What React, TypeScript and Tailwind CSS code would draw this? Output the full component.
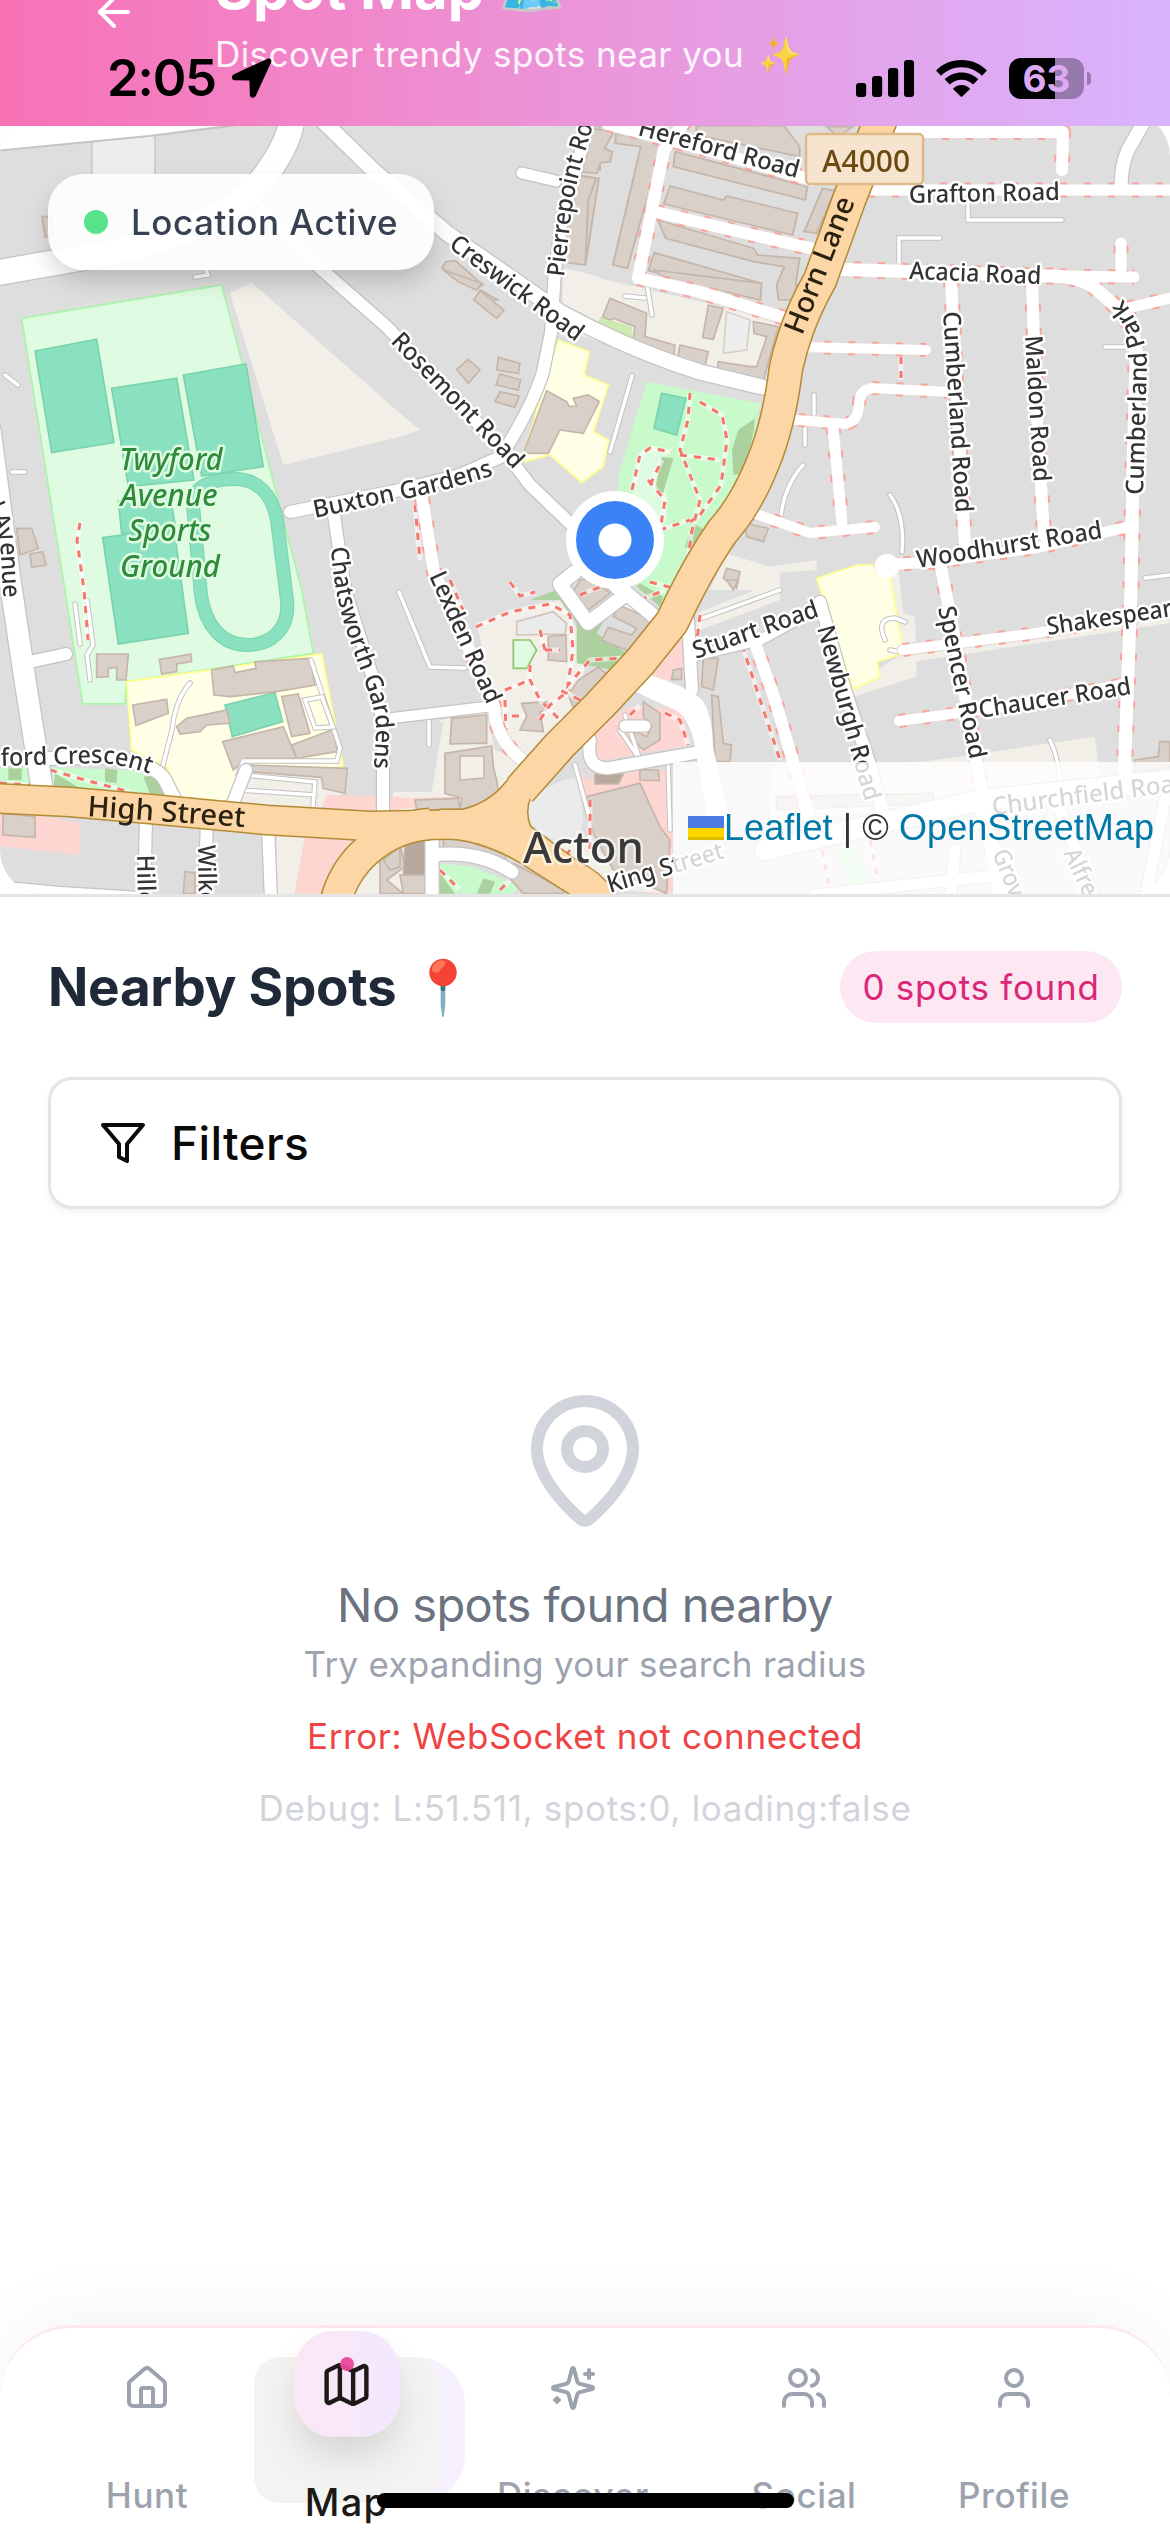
import React from "react";
import { ArrowLeft, House, Map as MapIcon, MapPin, User } from "lucide-react";

const BUILDING = { fill: "#d9d0c9", stroke: "#c6b5a9" };
const SERVICE = { fill: "none", stroke: "#fff" };

/* ---------- map data ---------- */

// Each sheet keeps its own coordinate space and is placed with a transform.
const SHEETS = {
  nw: "matrix(.3827 0 0 .3333 0 0)",
  ne: "matrix(.3827 0 0 .3333 570 0)",
  w: "matrix(.3333 0 0 .3333 0 270)",
  c: "matrix(.3333 0 0 .3333 380 270)",
  e: "matrix(.3333 0 0 .3333 770 270)",
  sw: "matrix(.3333 0 0 .3333 0 580)",
  s: "matrix(.3333 0 0 .3333 380 580)",
  se: "matrix(.3333 0 0 .3333 770 580)",
};
type Sheet = keyof typeof SHEETS;

type Area = [Sheet, string, string, string?];

const BEIGE = "#f2efe9";
const PARK = "#c8facc";
const WOOD = "#add19e";
const PITCH = "#8ae1bf";
const PITCH_EDGE = "#7bd3ae";
const SPORT = "#dffce2";
const SCHOOL = "#ffffe5";
const SCHOOL_EDGE = "#ffff8c";
const RETAIL = "#fdd6d2";
const LOT = "#eeeeee";
const DARK = "#b7a89b";

const AREAS: Area[] = [
  ["nw", "240,410 405,390 405,530 240,530", "#ededed", "#d9c9c9"],
  ["nw", "1475,805 1568,830 1568,900 1475,900", BEIGE],
  ["w", "690,70 755,38 1200,430 1260,480 1200,500 850,585", BEIGE],
  ["w", "65,145 665,45 905,960 940,1150 380,1235 375,1302 248,1302 190,930", SPORT, "#a9f5aa"],
  ["w", "105,243 290,208 342,518 155,548", PITCH, PITCH_EDGE],
  ["w", "335,355 530,325 582,630 385,650", PITCH, PITCH_EDGE],
  ["w", "550,315 738,282 790,590 605,618", PITCH, PITCH_EDGE],
  ["w", "355,692 510,672 528,780 365,790", PITCH, PITCH_EDGE],
  ["w", "308,803 522,775 565,1090 355,1122", PITCH, PITCH_EDGE],
  ["c", "550,0 1200,150 1140,350 610,200 545,180", BEIGE],
  ["c", "660,140 755,170 760,235 880,290 840,290 640,195", "#cdebb0"],
  ["c", "1040,125 1110,150 1100,240 1030,250", LOT, "#d8cfc8"],
  ["c", "535,210 628,245 612,315 685,345 640,485 686,510 670,590 605,638 510,555 435,575 430,550 460,460 500,310", SCHOOL, SCHOOL_EDGE],
  ["c", "800,335 1140,400 1115,560 1060,680 890,960 860,1010 780,940 700,760 720,600", PARK],
  ["c", "790,535 860,540 860,770 750,660", SPORT],
  ["c", "845,370 918,385 890,495 822,475", PITCH, PITCH_EDGE],
  ["c", "845,560 880,565 850,670 825,660", WOOD],
  ["c", "1125,445 1122,480 1090,612 1060,615 1056,540 1075,480", WOOD],
  ["c", "940,760 975,780 940,850 915,830", WOOD],
  ["c", "1040,850 1200,900 1200,960 990,960", BEIGE],
  ["s", "290,130 540,60 620,200 600,380 450,530 400,500 350,400", BEIGE],
  ["s", "450,60 530,30 620,140 680,110 650,160 740,220 700,270 590,250 590,130 540,60", WOOD],
  ["s", "410,125 520,95 560,130 555,162 410,165", "#ebebeb", "#d3c3bd"],
  ["s", "400,180 450,180 470,210 440,265 400,265", SPORT, "#8dc56c"],
  ["s", "700,60 760,40 830,110 800,150 720,85", BEIGE],
  ["s", "770,10 900,-20 850,75 800,40", PARK],
  ["s", "780,10 850,50 840,80 770,20", WOOD],
  ["s", "40,640 180,420 320,400 345,510 440,545 300,690 30,690", BEIGE],
  ["s", "40,430 190,425 155,635 35,635", "#dedede"],
  ["s", "30,655 230,650 230,670 30,690", RETAIL],
  ["s", "915,140 920,300 840,300 805,280", RETAIL],
  ["s", "640,460 740,380 900,385 930,495 640,545", RETAIL],
  ["s", "570,530 620,600 760,570 860,570 879,760 879,941 800,941 620,650", RETAIL],
  ["s", "450,650 550,600 600,590 610,720 590,800 500,770 440,720", "#ebebeb"],
  ["s", "500,780 620,780 720,870 880,941 700,930", BEIGE],
  ["s", "0,800 60,790 180,790 180,941 0,941", BEIGE],
  ["s", "180,850 280,860 420,920 400,941 180,941", PARK],
  ["s", "180,880 225,941 180,941", WOOD],
  ["s", "310,895 345,905 330,941 290,941", WOOD],
  ["s", "0,860 70,820 60,870 20,880", RETAIL],
  ["s", "950,100 1200,0 1200,60 960,150", BEIGE],
  ["sw", "380,305 965,222 1030,560 730,600 685,665 540,655 500,560 395,510", SCHOOL, SCHOOL_EDGE],
  ["sw", "675,375 825,338 848,425 697,470", PITCH, PITCH_EDGE],
  ["sw", "735,580 950,590 1030,640 960,685 720,670", BEIGE],
  ["sw", "0,555 480,575 500,648 150,628 0,615", PARK],
  ["sw", "165,580 240,625 240,632 160,628", WOOD],
  ["sw", "430,590 480,585 500,648 450,642", WOOD],
  ["sw", "315,565 352,570 350,610 315,605", WOOD],
  ["sw", "25,565 65,565 65,600 25,600", WOOD],
  ["sw", "0,700 110,705 242,730 238,825 0,798", RETAIL],
  ["sw", "980,645 1200,650 1200,695 965,685", RETAIL],
  ["sw", "1120,840 1200,780 1200,880", RETAIL],
  ["sw", "1120,850 1200,860 1200,941 1060,941", BEIGE],
  ["sw", "915,770 1075,775 1000,850 965,941 883,941", RETAIL],
  ["sw", "830,765 915,770 883,941 830,941", BEIGE],
  ["se", "0,-20 140,-30 140,-60 0,-40", BEIGE],
  ["se", "350,-40 385,-30 400,100 435,110 440,290 250,350 240,320 400,220", BEIGE],
  ["se", "140,-5 260,-45 355,-45 400,220 322,245 330,290 250,328", SCHOOL, SCHOOL_EDGE],
  ["se", "400,225 1200,105 1200,130 400,250", BEIGE],
  ["se", "0,560 460,545 975,470 990,600 400,680 0,740", BEIGE],
  ["se", "0,840 600,720 1200,650 1200,941 0,941", "#e9e7e4"],
  ["se", "200,800 250,790 300,900 320,930 240,930", PARK],
];

const BUILDINGS: [Sheet, string, string?][] = [
  ["nw", "1510,525 1565,535 1530,792 1483,785"],
  ["nw", "1530,378 1568,378 1568,510 1510,505"],
  ["nw", "1165,785 1190,782 1262,855 1240,868 1155,805"],
  ["nw", "1255,870 1300,900 1240,900"],
  ["nw", "110,650 135,650 135,710 118,710"],
  ["ne", "50,385 115,395 90,445 110,455 105,485 80,488 70,520 25,515"],
  ["ne", "0,525 68,535 48,600 40,795 -30,785"],
  ["ne", "120,400 215,425 238,445 150,805 112,795 185,440 118,430"],
  ["ne", "330,378 560,378 600,440 600,470 330,405"],
  ["ne", "275,455 620,560 615,600 270,500"],
  ["ne", "262,558 400,600 410,588 595,640 582,705 245,612"],
  ["ne", "230,660 480,745 490,765 600,775 590,850 600,900 545,900 540,855 560,800 480,785 250,715"],
  ["ne", "220,758 500,850 498,900 205,812"],
  ["ne", "660,565 692,572 645,700 612,695"],
  ["ne", "670,380 740,380 700,410"],
  ["w", "50,775 95,775 115,835 60,855"],
  ["w", "90,852 128,845 138,885 95,892"],
  ["c", "690,85 800,130 795,200 885,225 880,275 755,240 765,170 700,145 690,150 668,140"],
  ["c", "985,105 1030,115 1000,208 968,203"],
  ["c", "900,225 985,245 968,315 888,288"],
  ["c", "1120,155 1195,170 1150,330 1090,325 1010,310 1015,275 1110,290 1130,290 1160,200 1122,190"],
  ["c", "820,0 1145,40 1140,90 850,20"],
  ["c", "500,362 560,395 568,410 590,408 580,385 625,375 658,395 610,490 540,480 505,550 430,550"],
  ["c", "265,268 300,300 265,340 230,298"],
  ["c", "355,262 420,280 415,310 350,300"],
  ["c", "360,312 422,330 415,360 348,345"],
  ["c", "360,365 418,378 405,412 345,395"],
  ["c", "300,62 372,120 350,145 282,90"],
  ["c", "190,0 305,40 290,60 235,35"],
  ["c", "1095,760 1165,775 1150,815 1100,800"],
  ["c", "1040,895 1080,905 1070,955 1030,925"],
  ["s", "505,170 558,165 560,245 505,240"],
  ["s", "425,370 500,365 500,390 480,395 490,455 420,450 440,410"],
  ["s", "655,262 690,290 580,382 565,345 595,300"],
  ["s", "715,75 820,120 750,215 665,180 685,142 755,165 770,145 700,110"],
  ["s", "600,0 640,-10 690,40 625,90 575,45"],
  ["s", "215,415 320,405 320,490 280,490 210,492"],
  ["s", "195,520 335,498 340,560 350,600 355,635 300,672 240,690 245,655 195,640"],
  ["s", "105,660 235,655 240,688 110,690"],
  ["s", "620,650 780,610 840,740 870,780 860,941 700,870 640,760"],
  ["s", "645,582 730,582 715,612 645,612", DARK],
  ["s", "780,570 835,570 838,602 780,600"],
  ["s", "790,365 840,400 840,480 790,510 750,470 770,455 800,470 815,440 790,410"],
  ["s", "880,270 905,265 905,298 875,298"],
  ["s", "970,235 1015,235 1000,330 965,320"],
  ["s", "995,345 1015,350 1030,490 1055,495 1050,545 1005,545"],
  ["s", "0,815 60,790 75,860 20,900 70,941 0,941"],
  ["s", "75,785 140,780 140,885 70,885", DARK],
  ["s", "60,885 140,885 140,941 70,941"],
  ["s", "190,775 270,785 380,825 370,850 190,812"],
  ["s", "400,850 555,930 550,941 430,941 385,890"],
  ["s", "1040,0 1075,0 1060,30"],
  ["sw", "290,222 385,222 378,300 350,300 350,262 325,265 325,290 290,292"],
  ["sw", "478,238 530,230 572,222 575,245 530,252 530,275 485,282"],
  ["sw", "635,270 700,258 705,278 768,265 765,245 930,235 945,315 830,335 690,350 642,345"],
  ["sw", "398,375 500,358 505,400 408,437"],
  ["sw", "530,440 560,415 680,390 690,430 620,435 600,455 540,462"],
  ["sw", "845,350 895,342 930,460 875,470"],
  ["sw", "668,485 850,440 890,535 740,535 700,570"],
  ["sw", "875,495 1000,448 1012,515 890,535"],
  ["sw", "745,555 1042,565 1035,640 970,625 965,592 745,575"],
  ["sw", "10,700 105,710 105,772 8,765"],
  ["sw", "555,875 585,878 585,941 550,941"],
  ["sw", "1150,840 1200,800 1200,860 1170,870"],
  ["se", "1095,540 1165,530 1170,485 1200,485 1200,560 1095,580"],
  ["se", "20,650 490,640 490,670 20,690"],
];

// [path, width, has dashed pavement edges]
const ROADS: [string, number, boolean?][] = [
  ["M292 118C290 140 276 160 268 172C240 215 170 240 110 253L-10 274", 25],
  ["M320 118L375 172L448 234L560 312Q630 350 700 372L762 387", 15],
  ["M262 210L320 268L387 327L505 452L530 485L575 528", 12],
  ["M590 118L562 220L555 270L551 333L543 372Q533 405 503 453", 12],
  ["M522 173L556 181", 11],
  ["M608 124L700 148L812 180", 12, true],
  ["M686 120L664 150L638 278L700 292L785 318", 12, true],
  ["M656 212L740 232L818 250", 12, true],
  ["M868 190L1175 190", 11, true],
  ["M870 132L1063 132L1062 170", 12, true],
  ["M830 269L1045 276Q1078 275 1095 288L1122 312Q1138 335 1136 360L1133 470L1131 590L1124 780", 13, true],
  ["M1060 276L1134 277M1121 277L1121 243M1128 308L1175 297", 11, true],
  ["M1146 118L1128 150Q1121 165 1121 188", 13],
  ["M800 347L926 350", 10, true],
  ["M775 418L845 424Q858 422 859 405Q859 390 872 388L950 392", 10, true],
  ["M833 427L842 523", 11, true],
  ["M750 512L770 519L810 533L875 527", 10, true],
  ["M951 280L957 400L965 545", 12, true],
  ["M1032 280L1036 400L1044 535", 12, true],
  ["M880 565L935 562L1040 547L1132 526", 11, true],
  ["M940 562L957 650L977 765L1000 900", 12, true],
  ["M903 650L1030 634L1175 610", 10, true],
  ["M899 721L1010 706L1124 684", 10, true],
  ["M752 635L775 700L810 820", 12, true],
  ["M820 602L845 690L870 765L885 820", 12],
  ["M690 657L760 640L822 606", 10],
  ["M290 512L400 490L460 475L505 455", 12],
  ["M334 515L345 590L372 675L383 722L383 812", 12],
  ["M422 498L434 572L465 640L494 706Q495 740 525 762", 12, true],
  ["M393 718L494 706", 10],
  ["M-10 430L10 580L25 680L42 788", 21],
  ["M34 661L66 654", 12],
  ["M-5 760L100 757Q155 762 165 780L176 802", 13],
  ["M246 770L233 803", 12],
  ["M146 818L144 900M207 822L204 900M268 826L271 900", 12],
  ["M-5 887L60 893L140 898", 12],
  ["M575 572L560 584L588 623L625 595L600 570M625 592L655 617", 14],
  ["M688 620L692 690M590 740Q585 770 610 768L700 752", 12],
  ["M432 835L432 900M432 855Q480 850 512 872", 13],
  ["M625 726L645 726", 11],
  ["M765 850L860 828L980 800L1175 780", 20],
  ["M980 810L1000 860L1010 900M1055 800L1080 860L1095 900M1165 800L1145 900M815 895L1000 875M955 850L950 900", 11],
];

const SERVICES = [
  "M75 604L80 644M87 600L93 645L87 655L90 680",
  "M190 683Q175 700 172 730L163 765",
  "M311 660L324 700L340 748L337 761L243 761L238 775",
  "M305 700L322 697L333 727L315 728Z",
  "M245 775L315 782L313 806M240 790L315 795",
  "M399 592L430 667L465 668M429 720L429 745",
  "M632 376L610 452M1105 347L1125 347M814 395L814 415M805 425L805 445",
  "M803 465Q785 485 781 515M890 495Q905 515 902 552",
  "M840 214L840 190M968 190L968 220L1062 220M899 265L899 238L940 238",
  "M818 265L822 230M625 296L645 298M647 285L652 315",
  "M703 618L780 590M620 730L640 760L625 715M575 765L590 820M668 760L670 830",
  "M885 640Q875 618 895 618L905 622M890 650L900 652",
  "M195 277L208 275L206 270M5 375L18 385M12 472L25 472M1145 578L1170 575M1050 740Q1060 760 1060 790",
];

const FOOTPATHS = [
  "M80 523L77 540L84 590L88 640",
  "M690 393L688 420L680 450L700 500L692 530L685 580M700 402L722 415L727 440L721 485L700 515L690 522M680 455L720 460",
  "M632 490L640 455L650 448L672 452M650 485L662 460M648 480L665 500L660 530L690 520",
  "M476 627L510 612L550 604L570 615L573 650L568 685L590 660L625 658M540 630L545 650M530 665L530 680L540 700L560 720M545 650L560 650M505 690L530 680",
  "M512 716L525 716M540 720L550 705L570 690M510 582L520 596L535 592M450 580L463 610M415 505L420 560",
  "M505 700L506 735M580 700L560 690M590 800L590 850M570 850L565 857M440 870L460 890M500 890L510 880",
  "M700 615L697 640M630 715L640 705M665 713L680 720L688 745M742 645L780 760",
  "M640 600L665 590M580 595L600 587M0 783L30 785M50 770L85 780L130 792M650 582L680 590",
  "M901 357L901 380M822 850L830 890M870 840L880 890",
];

const HALO = { stroke: "#fff", strokeWidth: 5, strokeLinejoin: "round" as const, paintOrder: "stroke" };

const STRAIGHT: [string, number, number, number, number][] = [
  ["Hereford Road", 637, 135, 797, 178],
  ["Grafton Road", 909, 203, 1060, 200],
  ["Acacia Road", 909, 279, 1041, 284],
  ["Creswick Road", 448, 247, 576, 342],
  ["Rosemont Road", 390, 342, 514, 470],
  ["Lexden Road", 429, 576, 487, 705],
  ["Cumberland Road", 943, 312, 956, 513],
  ["Maldon Road", 1025, 336, 1034, 482],
  ["Woodhurst Road", 918, 568, 1103, 538],
  ["Shakespear", 1048, 635, 1173, 616],
  ["Chaucer Road", 980, 718, 1132, 694],
  ["Spencer Road", 938, 608, 970, 760],
  ["Newburgh Road", 817, 628, 865, 802],
  ["Stuart Road", 696, 659, 820, 616],
  ["Hillc", 137, 855, 138, 903],
  ["Wilkc", 198, 845, 199, 903],
  ["King Street", 610, 893, 725, 858],
  ["Churchfield Road", 993, 815, 1190, 790],
  ["Grove", 992, 853, 1015, 910],
  ["Alfred", 1063, 853, 1090, 910],
];

const CURVED: [string, string, number][] = [
  ["Pierrepoint Road", "M564 277L571 215Q577 170 602 100", 182],
  ["Buxton Gardens", "M315 518L400 500Q450 490 500 473", 184],
  ["Chatsworth Gardens", "M331 547C335 610 350 640 366 685S374 730 374 775", 228],
  ["Cumberland Park", "M1143 495L1147 365Q1147 330 1120 296", 202],
  ["rd Avenue", "M-20 490L0 540L4 608", 112],
  ["ford Crescent", "M1 766L100 763Q130 765 160 778", 150],
];

function StraightLabel({ d }: { d: [string, number, number, number, number] }) {
  const [text, x1, y1, x2, y2] = d;
  const angle = (Math.atan2(y2 - y1, x2 - x1) * 180) / Math.PI;
  return (
    <text
      transform={`translate(${x1} ${y1}) rotate(${angle})`}
      textLength={Math.hypot(x2 - x1, y2 - y1)}
      lengthAdjust="spacingAndGlyphs"
      {...HALO}
    >
      {text}
    </text>
  );
}

const PRIMARY =
  "M882 116L849 200L820 280Q796 322 786 368Q779 425 762 465Q746 505 722 532Q696 570 672 622L640 662L600 705L560 745L520 790";
const HIGH_STREET = "M-10 798L70 802L150 809L267 820L370 826L480 824";
const JUNCTION =
  "M440 810L463 810Q490 803 505 784L530 757L600 725L530 797Q524 812 530 827L578 862Q600 872 612 890L620 900L580 900L520 862Q480 838 440 838Z";
const LEFT_BRANCH = "M430 824C395 826 350 850 336 900";
const TRACK =
  "M193 505C192 487 212 479 235 479C258 479 272 495 277 520L287 600C290 630 270 645 247 645C222 645 205 625 201 595Z";

function StreetMap() {
  return (
    <svg viewBox="0 126 1170 768" className="block h-[768px] w-[1170px]" fontFamily="'Noto Sans', sans-serif">
      <rect x="0" y="100" width="1170" height="800" fill="#dedede" />
      <g className="blur-[0.7px]">
        {AREAS.map(([s, p, fill, stroke], i) => (
          <g key={i} transform={SHEETS[s]}>
            <polygon points={p} fill={fill} stroke={stroke ?? "none"} strokeWidth="5" />
          </g>
        ))}
        <path d={TRACK} fill={SPORT} stroke={PITCH_EDGE} strokeWidth="14" />
        <path d={TRACK} fill="none" stroke={PITCH} strokeWidth="12" />
        {BUILDINGS.map(([s, p, fill], i) => (
          <g key={i} transform={SHEETS[s]}>
            <polygon points={p} {...BUILDING} fill={fill ?? BUILDING.fill} strokeWidth="5" />
          </g>
        ))}
        <polygon points="460,756 484,756 484,778 460,780" fill={BEIGE} stroke="#c6b5a9" strokeWidth="1.5" />

        {SERVICES.map((d, i) => (
          <g key={i} strokeLinecap="round">
            <path d={d} {...SERVICE} stroke="#c2c2c2" strokeWidth="5.5" />
            <path d={d} {...SERVICE} strokeWidth="3.5" />
          </g>
        ))}
        {FOOTPATHS.map((d, i) => (
          <g key={i} fill="none">
            <path d={d} stroke="#fff" strokeWidth="5" opacity=".55" />
            <path d={d} stroke="#f8766c" strokeWidth="3" strokeDasharray="7 7" />
          </g>
        ))}

        <g fill="none" strokeLinejoin="round" strokeLinecap="round">
          {ROADS.map(([d, w, walk], i) => (
            <g key={i}>
              <path d={d} stroke={walk ? "#e3dcda" : "#c4c4c4"} strokeWidth={w + 2.5} />
              {walk && (
                <path d={d} stroke="#f9a59d" strokeWidth={w + 4} strokeDasharray="7 17" strokeLinecap="butt" />
              )}
            </g>
          ))}
          {ROADS.map(([d, w]) => (
            <path key={d} d={d} stroke="#fff" strokeWidth={w} />
          ))}
        </g>
        <circle cx="887" cy="566" r="12" fill="#fff" />
        <polygon points="-5,118 245,124 149,136 -5,151" fill="#fff" stroke="#c4c4c4" strokeWidth="2" />
        <path d="M632 690L650 675Q690 688 702 700Q712 712 713 748L730 820L708 820L696 752Q690 712 668 707Z" fill="#fff" />

        <g fill="none" strokeLinejoin="round">
          <path d={LEFT_BRANCH} stroke="#b48a35" strokeWidth="33" />
          <path d={HIGH_STREET} stroke="#b48a35" strokeWidth="31" />
          <path d={PRIMARY} stroke="#b48a35" strokeWidth="35" />
          <path d={JUNCTION} stroke="#b48a35" strokeWidth="3" />
          <path d={LEFT_BRANCH} stroke="#fcd6a4" strokeWidth="30" />
          <path d={HIGH_STREET} stroke="#fcd6a4" strokeWidth="28" />
          <path d={PRIMARY} stroke="#fcd6a4" strokeWidth="32" />
          <path d={JUNCTION} fill="#fcd6a4" />
        </g>

        <g fontSize="24.5" fontWeight="500" fill="#333">
          {STRAIGHT.map((d) => (
            <StraightLabel key={d[0]} d={d} />
          ))}
          {CURVED.map(([text, d, len], i) => (
            <g key={text}>
              <path id={`label-${i}`} d={d} fill="none" />
              <text textLength={len} lengthAdjust="spacingAndGlyphs" {...HALO}>
                <textPath href={`#label-${i}`} textLength={len} lengthAdjust="spacingAndGlyphs">
                  {text}
                </textPath>
              </text>
            </g>
          ))}
        </g>
        <g fontSize="28.5" fontWeight="500" fill="#2b2111">
          <text transform="translate(802 336) rotate(-68.5)" textLength="145" lengthAdjust="spacingAndGlyphs">
            Horn Lane
          </text>
          <text transform="translate(87 816) rotate(4)" textLength="158" lengthAdjust="spacingAndGlyphs">
            High Street
          </text>
        </g>
        <text x="523" y="863" fontSize="44" fontWeight="500" fill="#3a3a3a" textLength="121" lengthAdjust="spacingAndGlyphs" {...HALO} stroke="#ffffff99">
          Acton
        </text>
        <g fontSize="30" fontWeight="500" fontStyle="italic" fill="#2f8a3c" textAnchor="middle" {...HALO} stroke="#dffce2">
          <text x="171" y="470" textLength="103" lengthAdjust="spacingAndGlyphs">Twyford</text>
          <text x="169" y="506" textLength="97" lengthAdjust="spacingAndGlyphs">Avenue</text>
          <text x="170" y="541" textLength="83" lengthAdjust="spacingAndGlyphs">Sports</text>
          <text x="170" y="577" textLength="100" lengthAdjust="spacingAndGlyphs">Ground</text>
        </g>
        <rect x="806" y="134" width="117" height="50" rx="4" fill="#f7e4cf" stroke="#e0b98a" strokeWidth="2.5" />
        <text x="822" y="172" fontSize="30" fontWeight="500" fill="#6b4a12" textLength="88" lengthAdjust="spacingAndGlyphs">
          A4000
        </text>
      </g>

      <circle cx="615" cy="540" r="49" fill="#fff" />
      <circle cx="615" cy="540" r="39" fill="#3b82f6" />
      <circle cx="615" cy="540" r="16.5" fill="#fff" />
    </svg>
  );
}

/* ---------- status bar ---------- */

function StatusBar() {
  return (
    <div className="absolute inset-x-0 top-[48px] flex h-[60px] items-center pl-[107px] pr-[79px] text-black">
      <span className="text-[51px] font-semibold leading-[60px] tracking-[-1.2px]">2:05</span>
      <svg viewBox="0 0 40 40" className="ml-[16px] h-[40px] w-[40px]">
        <path
          d="M35.5.8 2 16.2C-1.3 17.8-.4 22.2 3 22.3L16.500 22.500C17.200 22.500 17.500 22.800 17.500 23.500L17.800 36.500C17.900 40.300 22.300 41 23.800 37.800L39 4.500C40.200 1.700 38.200-.4 35.500.8Z"
          fill="#000"
        />
      </svg>
      <svg viewBox="0 0 58 37" className="ml-auto h-[37px] w-[58px]">
        <rect x="0" y="23" width="10.200" height="14" rx="3" />
        <rect x="16" y="16" width="10.200" height="21" rx="3" />
        <rect x="32" y="8" width="10.200" height="29" rx="3" />
        <rect x="48" y="0" width="10" height="37" rx="3" />
      </svg>
      <svg viewBox="0 0 51 37" className="ml-[22px] h-[37px] w-[51px]">
        <path d="M25.500 0C35.500 0 44.500 4 51 10.500L46 15.700C40.500 10.500 33.500 7.300 25.500 7.300S10.500 10.500 5 15.700L0 10.500C6.500 4 15.500 0 25.500 0Z" />
        <path d="M25.500 12.500C32 12.500 38 15 42.300 19.200L37.200 24.500C34 21.500 30 19.700 25.500 19.700S17 21.500 13.800 24.500L8.700 19.200C13 15 19 12.500 25.500 12.500Z" />
        <path d="M25.500 25C28.500 25 31.200 26 33.300 28L34 29 25.500 37.200 17 29 17.700 28C19.800 26 22.500 25 25.500 25Z" />
      </svg>
      <div className="ml-[22px] flex items-center gap-[3px]">
        <div className="flex h-[41px] w-[75px] items-center justify-center rounded-[12px] bg-[linear-gradient(90deg,#000_62%,#967aae_62%)]">
          <span className="text-[37px] font-bold leading-[41px] text-[#dcaaf2]">63</span>
        </div>
        <div className="h-[13px] w-[4px] rounded-r-full bg-[#967aae]" />
      </div>
    </div>
  );
}

/* ---------- nav ---------- */

const SparklesIcon = () => (
  <svg viewBox="0 0 24 24" className="size-[48px]" fill="none" stroke="currentColor" strokeWidth="2" strokeLinecap="round" strokeLinejoin="round">
    <path d="M9.937 15.5A2 2 0 0 0 8.5 14.063l-6.135-1.582a.5.5 0 0 1 0-.962L8.5 9.936A2 2 0 0 0 9.937 8.5l1.582-6.135a.5.5 0 0 1 .963 0L14.063 8.5A2 2 0 0 0 15.5 9.937l6.135 1.581a.5.5 0 0 1 0 .964L15.5 14.063a2 2 0 0 0-1.437 1.437l-1.582 6.135a.5.5 0 0 1-.963 0z" />
    <path d="M20 3v4M22 5h-4M4 17v2M5 18H3" />
  </svg>
);

const UsersIcon = () => (
  <svg viewBox="0 0 24 24" className="size-[48px]" fill="none" stroke="currentColor" strokeWidth="2" strokeLinecap="round" strokeLinejoin="round">
    <path d="M16 21v-2a4 4 0 0 0-4-4H6a4 4 0 0 0-4 4v2" />
    <circle cx="9" cy="7" r="4" />
    <path d="M22 21v-2a4 4 0 0 0-3-3.87M16 3.130a4 4 0 0 1 0 7.750" />
  </svg>
);

function NavItem({ icon, label }: { icon: React.ReactNode; label: string }) {
  return (
    <div className="flex flex-col items-center pt-[36px] text-[#9ca3af]">
      {icon}
      <span className="mt-[59px] text-[35px] font-medium leading-[48px] tracking-[0.6px]">{label}</span>
    </div>
  );
}

function ActiveNavItem() {
  return (
    <div className="relative pl-[14px] pt-[29px]">
      <div className="absolute left-[14px] top-[29px] h-[146px] w-[211px] rounded-[48px] bg-[#f6f0ff]" />
      <div className="relative flex h-[146px] w-[185px] flex-col items-center rounded-[26px] bg-[#f3f3f1]">
        <div className="relative -mt-[26px] flex size-[106px] shrink-0 items-center justify-center rounded-[40px] bg-linear-to-r from-[#fce7f3] to-[#f3e8ff] shadow-[0_22px_40px_-6px_rgba(0,0,0,0.14)]">
          <MapIcon className="size-[53px] text-[#1c1917]" strokeWidth={2} />
          <div className="absolute left-[46px] top-[26px] size-[14px] rounded-full bg-[#ec4899]/95" />
        </div>
        <span className="mt-[39px] text-[38px] font-medium leading-[53px] tracking-[1.2px] text-[#1c1917]">Map</span>
      </div>
    </div>
  );
}

export default function App() {
  return (
    <div className="relative flex h-[2532px] w-[1170px] flex-col overflow-hidden bg-white font-['Inter',sans-serif]">
      <header className="relative z-10 h-[126px] shrink-0 overflow-hidden bg-linear-to-r from-[#f871b5] to-[#d8b4fe] text-white">
        <div className="-mt-[54px] flex items-center pl-[90px]">
          <ArrowLeft className="size-[48px]" strokeWidth={2} />
          <div className="ml-[77px]">
            <h1 className="flex items-center gap-[14px] whitespace-nowrap text-[58px] font-bold leading-[84px]">
              Spot Map <span className="text-[54px]">🗺️</span>
            </h1>
            <p className="flex items-center gap-[14px] whitespace-nowrap text-[35px] leading-[48px] tracking-[0.43px] text-white/90">
              Discover trendy spots near you <span>✨</span>
            </p>
          </div>
        </div>
        <StatusBar />
      </header>

      <section className="relative h-[771px] shrink-0 overflow-hidden border-b-[3px] border-[#e5e5e5]">
        <div className="-mt-[14px] overflow-hidden rounded-[44px] pt-[14px]">
          <StreetMap />
        </div>
        <div className="absolute left-[48px] top-[48px] flex h-[96px] w-[386px] items-center gap-[23px] rounded-[36px] bg-white/90 pl-[36px] shadow-[0_12px_24px_-2px_rgba(0,0,0,0.18)]">
          <div className="size-[24px] rounded-full bg-[#57e389]" />
          <span className="whitespace-nowrap text-[35px] font-medium leading-[48px] tracking-[0.53px] text-[#374151]">Location Active</span>
        </div>
        <div className="absolute bottom-0 right-0 flex h-[132px] w-[497px] items-center whitespace-nowrap rounded-br-[44px] bg-white/80 pl-[15px] font-['Liberation_Sans',sans-serif] text-[36px] leading-[48px] text-[#333]">
          <svg viewBox="0 0 12 8" className="h-[24px] w-[36px]">
            <path fill="#4c7be1" d="M0 0h12v4H0z" />
            <path fill="#ffd500" d="M0 4h12v3H0z" />
            <path fill="#e0bc00" d="M0 7h12v1H0z" />
          </svg>
          <span className="whitespace-pre tracking-[0.08px]">
            <span className="text-[#0078a8]">Leaflet</span> | © <span className="text-[#0078a8]">OpenStreetMap</span>
          </span>
        </div>
      </section>

      <main className="flex flex-col px-[48px] pt-[54px]">
        <div className="flex h-[72px] items-center justify-between">
          <h2 className="flex items-center gap-[14px] text-[53px] font-bold leading-[72px] tracking-[-0.3px] text-[#1f2937]">
            Nearby Spots <span className="text-[53px]">📍</span>
          </h2>
          <span className="flex h-[72px] w-[282px] items-center justify-center rounded-full bg-[#fce7f3] text-[35px] leading-[48px] tracking-[0.7px] text-[#db2777]">
            0 spots found
          </span>
        </div>

        <button className="mt-[54px] flex h-[132px] items-center gap-[24px] rounded-[24px] border-[3px] border-[#e5e5e5] bg-white pl-[48px] text-[#0a0a0a] shadow-[0_3px_6px_rgba(0,0,0,0.06)]">
          <svg viewBox="0 0 24 24" className="size-[48px]" fill="none" stroke="currentColor" strokeWidth="2" strokeLinecap="round" strokeLinejoin="round">
            <polygon points="22 3 2 3 10 12.460 10 19 14 21 14 12.460 22 3" />
          </svg>
          <span className="text-[46px] font-medium leading-[72px] tracking-[0.34px]">Filters</span>
        </button>

        <div className="flex flex-col items-center pt-[180px] text-[35px] leading-[48px]">
          <MapPin className="size-[144px] text-[#d1d5db]" strokeWidth={2} />
          <p className="mt-[36px] text-[47px] leading-[71px] tracking-[-0.58px] text-[#6b7280]">No spots found nearby</p>
          <p className="tracking-[0.27px] text-[#9ca3af]">Try expanding your search radius</p>
          <p className="mt-[24px] tracking-[0.59px] text-[#ef4444]">Error: WebSocket not connected</p>
          <p className="mt-[24px] tracking-[0.68px] text-[#d1d5db]">Debug: L:51.511, spots:0, loading:false</p>
        </div>
      </main>

      <nav className="mt-auto grid h-[207px] shrink-0 grid-cols-[186px_212px_242px_220px_200px] rounded-t-[72px] border-t-[3px] border-[#fce7f3] bg-white pl-[54px] shadow-[0_-12px_75px_rgba(0,0,0,0.045)]">
        <NavItem icon={<House className="size-[48px]" strokeWidth={2} />} label="Hunt" />
        <ActiveNavItem />
        <NavItem icon={<SparklesIcon />} label="Discover" />
        <NavItem icon={<UsersIcon />} label="Social" />
        <NavItem icon={<User className="size-[48px]" strokeWidth={2} />} label="Profile" />
      </nav>
      <div className="absolute bottom-[24px] left-[377px] h-[15px] w-[417px] rounded-full bg-black" />
    </div>
  );
}
